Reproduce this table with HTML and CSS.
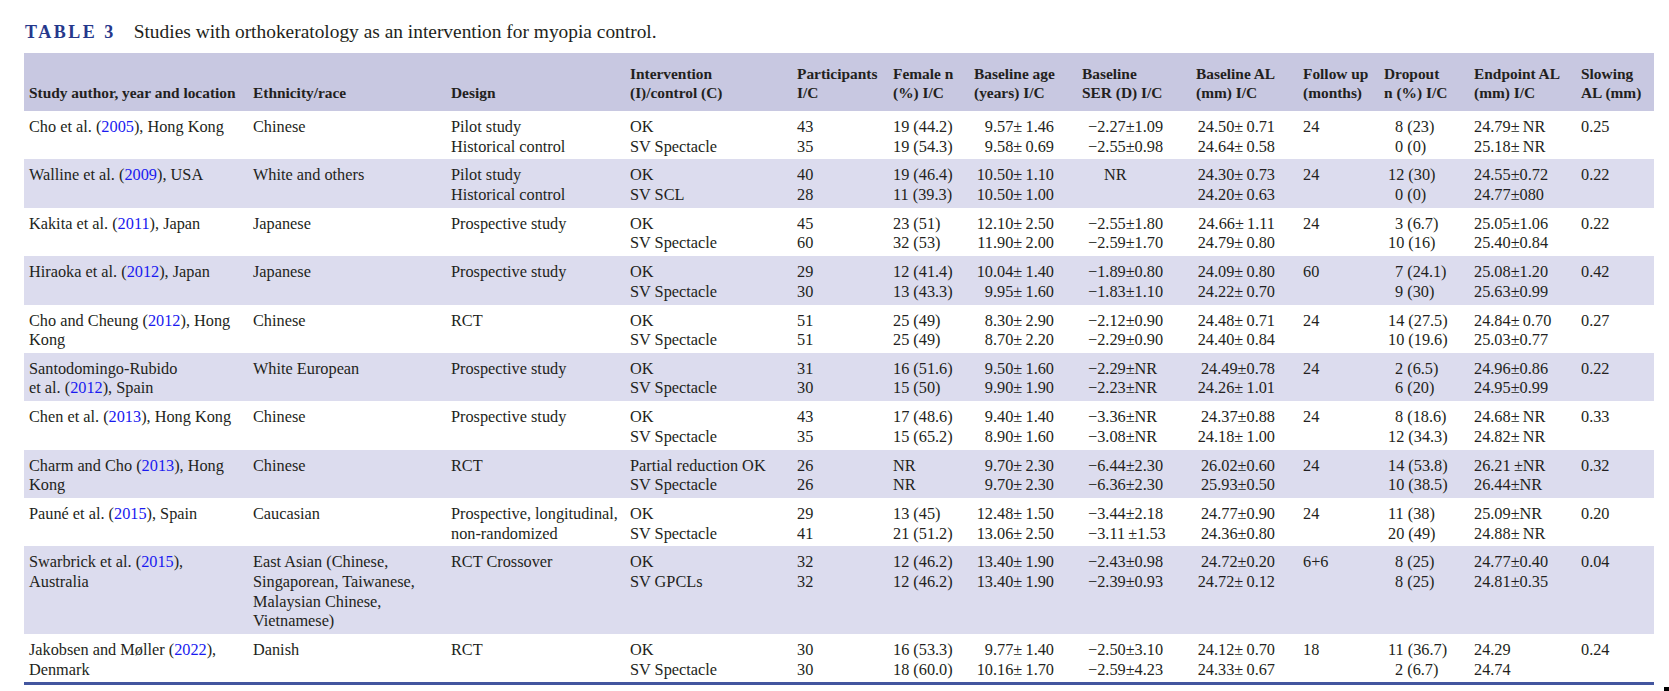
FILE: index.html
```html
<!DOCTYPE html>
<html lang="en">
<head>
<meta charset="utf-8">
<title>Table 3</title>
<link rel="stylesheet" href="styles.css">
</head>
<body>
<div class="page">
  <p class="caption"><span class="caption-label">TABLE 3</span><span class="caption-text">Studies with orthokeratology as an intervention for myopia control.</span></p>
  <div class="table-wrap">
    <table class="tbl">
      <colgroup>
        <col class="w1"><col class="w2"><col class="w3"><col class="w4"><col class="w5"><col class="w6"><col class="w7"><col class="w8"><col class="w9"><col class="w10"><col class="w11"><col class="w12"><col class="w13">
      </colgroup>
      <thead>
        <tr>
          <th>Study author, year and location</th>
          <th>Ethnicity/race</th>
          <th>Design</th>
          <th>Intervention<br>(I)/control (C)</th>
          <th>Participants<br>I/C</th>
          <th>Female n<br>(%) I/C</th>
          <th>Baseline age<br>(years) I/C</th>
          <th>Baseline<br>SER (D) I/C</th>
          <th>Baseline AL<br>(mm) I/C</th>
          <th>Follow up<br>(months)</th>
          <th>Dropout<br>n (%) I/C</th>
          <th>Endpoint AL<br>(mm) I/C</th>
          <th>Slowing<br>AL (mm)</th>
        </tr>
      </thead>
      <tbody>
        <tr>
          <td>Cho et al. (<span class="yr">2005</span>), Hong Kong</td>
          <td>Chinese</td>
          <td>Pilot study<br>Historical control</td>
          <td>OK<br>SV Spectacle</td>
          <td>43<br>35</td>
          <td>19 (44.2)<br>19 (54.3)</td>
          <td class="r">9.57±&thinsp;1.46<br>9.58±&thinsp;0.69</td>
          <td class="ser">−2.27±1.09<br>−2.55±0.98</td>
          <td class="r">24.50±&thinsp;0.71<br>24.64±&thinsp;0.58</td>
          <td>24</td>
          <td class="drop"><span class="fig"></span>8 (23)<br><span class="fig"></span>0 (0)</td>
          <td>24.79±&thinsp;NR<br>25.18±&thinsp;NR</td>
          <td>0.25</td>
        </tr>
        <tr class="alt">
          <td>Walline et al. (<span class="yr">2009</span>), USA</td>
          <td>White and others</td>
          <td>Pilot study<br>Historical control</td>
          <td>OK<br>SV SCL</td>
          <td>40<br>28</td>
          <td>19 (46.4)<br>11 (39.3)</td>
          <td class="r">10.50±&thinsp;1.10<br>10.50±&thinsp;1.00</td>
          <td class="ser"><span class="nr">NR</span></td>
          <td class="r">24.30±&thinsp;0.73<br>24.20±&thinsp;0.63</td>
          <td>24</td>
          <td class="drop">12 (30)<br><span class="fig"></span>0 (0)</td>
          <td>24.55±0.72<br>24.77±080</td>
          <td>0.22</td>
        </tr>
        <tr>
          <td>Kakita et al. (<span class="yr">2011</span>), Japan</td>
          <td>Japanese</td>
          <td>Prospective study</td>
          <td>OK<br>SV Spectacle</td>
          <td>45<br>60</td>
          <td>23 (51)<br>32 (53)</td>
          <td class="r">12.10±&thinsp;2.50<br>11.90±&thinsp;2.00</td>
          <td class="ser">−2.55±1.80<br>−2.59±1.70</td>
          <td class="r">24.66±&thinsp;1.11<br>24.79±&thinsp;0.80</td>
          <td>24</td>
          <td class="drop"><span class="fig"></span>3 (6.7)<br>10 (16)</td>
          <td>25.05±1.06<br>25.40±0.84</td>
          <td>0.22</td>
        </tr>
        <tr class="alt">
          <td>Hiraoka et al. (<span class="yr">2012</span>), Japan</td>
          <td>Japanese</td>
          <td>Prospective study</td>
          <td>OK<br>SV Spectacle</td>
          <td>29<br>30</td>
          <td>12 (41.4)<br>13 (43.3)</td>
          <td class="r">10.04±&thinsp;1.40<br>9.95±&thinsp;1.60</td>
          <td class="ser">−1.89±0.80<br>−1.83±1.10</td>
          <td class="r">24.09±&thinsp;0.80<br>24.22±&thinsp;0.70</td>
          <td>60</td>
          <td class="drop"><span class="fig"></span>7 (24.1)<br><span class="fig"></span>9 (30)</td>
          <td>25.08±1.20<br>25.63±0.99</td>
          <td>0.42</td>
        </tr>
        <tr>
          <td>Cho and Cheung (<span class="yr">2012</span>), Hong<br>Kong</td>
          <td>Chinese</td>
          <td>RCT</td>
          <td>OK<br>SV Spectacle</td>
          <td>51<br>51</td>
          <td>25 (49)<br>25 (49)</td>
          <td class="r">8.30±&thinsp;2.90<br>8.70±&thinsp;2.20</td>
          <td class="ser">−2.12±0.90<br>−2.29±0.90</td>
          <td class="r">24.48±&thinsp;0.71<br>24.40±&thinsp;0.84</td>
          <td>24</td>
          <td class="drop">14 (27.5)<br>10 (19.6)</td>
          <td>24.84±&thinsp;0.70<br>25.03±0.77</td>
          <td>0.27</td>
        </tr>
        <tr class="alt">
          <td>Santodomingo-Rubido<br>et al. (<span class="yr">2012</span>), Spain</td>
          <td>White European</td>
          <td>Prospective study</td>
          <td>OK<br>SV Spectacle</td>
          <td>31<br>30</td>
          <td>16 (51.6)<br>15 (50)</td>
          <td class="r">9.50±&thinsp;1.60<br>9.90±&thinsp;1.90</td>
          <td class="ser">−2.29±NR<br>−2.23±NR</td>
          <td class="r">24.49±0.78<br>24.26±&thinsp;1.01</td>
          <td>24</td>
          <td class="drop"><span class="fig"></span>2 (6.5)<br><span class="fig"></span>6 (20)</td>
          <td>24.96±0.86<br>24.95±0.99</td>
          <td>0.22</td>
        </tr>
        <tr>
          <td>Chen et al. (<span class="yr">2013</span>), Hong Kong</td>
          <td>Chinese</td>
          <td>Prospective study</td>
          <td>OK<br>SV Spectacle</td>
          <td>43<br>35</td>
          <td>17 (48.6)<br>15 (65.2)</td>
          <td class="r">9.40±&thinsp;1.40<br>8.90±&thinsp;1.60</td>
          <td class="ser">−3.36±NR<br>−3.08±NR</td>
          <td class="r">24.37±0.88<br>24.18±&thinsp;1.00</td>
          <td>24</td>
          <td class="drop"><span class="fig"></span>8 (18.6)<br>12 (34.3)</td>
          <td>24.68±&thinsp;NR<br>24.82±&thinsp;NR</td>
          <td>0.33</td>
        </tr>
        <tr class="alt">
          <td>Charm and Cho (<span class="yr">2013</span>), Hong<br>Kong</td>
          <td>Chinese</td>
          <td>RCT</td>
          <td>Partial reduction OK<br>SV Spectacle</td>
          <td>26<br>26</td>
          <td>NR<br>NR</td>
          <td class="r">9.70±&thinsp;2.30<br>9.70±&thinsp;2.30</td>
          <td class="ser">−6.44±2.30<br>−6.36±2.30</td>
          <td class="r">26.02±0.60<br>25.93±0.50</td>
          <td>24</td>
          <td class="drop">14 (53.8)<br>10 (38.5)</td>
          <td>26.21&thinsp;±NR<br>26.44±NR</td>
          <td>0.32</td>
        </tr>
        <tr>
          <td>Pauné et al. (<span class="yr">2015</span>), Spain</td>
          <td>Caucasian</td>
          <td>Prospective, longitudinal,<br>non-randomized</td>
          <td>OK<br>SV Spectacle</td>
          <td>29<br>41</td>
          <td>13 (45)<br>21 (51.2)</td>
          <td class="r">12.48±&thinsp;1.50<br>13.06±&thinsp;2.50</td>
          <td class="ser">−3.44±2.18<br>−3.11&thinsp;±1.53</td>
          <td class="r">24.77±0.90<br>24.36±0.80</td>
          <td>24</td>
          <td class="drop">11 (38)<br>20 (49)</td>
          <td>25.09±NR<br>24.88±&thinsp;NR</td>
          <td>0.20</td>
        </tr>
        <tr class="alt">
          <td>Swarbrick et al. (<span class="yr">2015</span>),<br>Australia</td>
          <td>East Asian (Chinese,<br>Singaporean, Taiwanese,<br>Malaysian Chinese,<br>Vietnamese)</td>
          <td>RCT Crossover</td>
          <td>OK<br>SV GPCLs</td>
          <td>32<br>32</td>
          <td>12 (46.2)<br>12 (46.2)</td>
          <td class="r">13.40±&thinsp;1.90<br>13.40±&thinsp;1.90</td>
          <td class="ser">−2.43±0.98<br>−2.39±0.93</td>
          <td class="r">24.72±0.20<br>24.72±&thinsp;0.12</td>
          <td>6+6</td>
          <td class="drop"><span class="fig"></span>8 (25)<br><span class="fig"></span>8 (25)</td>
          <td>24.77±0.40<br>24.81±0.35</td>
          <td>0.04</td>
        </tr>
        <tr>
          <td>Jakobsen and Møller (<span class="yr">2022</span>),<br>Denmark</td>
          <td>Danish</td>
          <td>RCT</td>
          <td>OK<br>SV Spectacle</td>
          <td>30<br>30</td>
          <td>16 (53.3)<br>18 (60.0)</td>
          <td class="r">9.77±&thinsp;1.40<br>10.16±&thinsp;1.70</td>
          <td class="ser">−2.50±3.10<br>−2.59±4.23</td>
          <td class="r">24.12±&thinsp;0.70<br>24.33±&thinsp;0.67</td>
          <td>18</td>
          <td class="drop">11 (36.7)<br><span class="fig"></span>2 (6.7)</td>
          <td>24.29<br>24.74</td>
          <td>0.24</td>
        </tr>
      </tbody>
    </table>
  </div>
  <div class="mark"></div>
</div>
</body>
</html>
```

FILE: styles.css
```css
* {
  box-sizing: border-box;
}

html,
body {
  margin: 0;
  padding: 0;
  background: #ffffff;
}

body {
  font-family: "Liberation Serif", "Times New Roman", serif;
  color: #231f20;
}

.page {
  position: relative;
  width: 1669px;
  height: 691px;
  padding: 20px 0 0 24px;
  overflow: hidden;
}

.caption {
  display: flex;
  align-items: baseline;
  gap: 18px;
  height: 24px;
  margin: 0 0 9px;
  padding-left: 1px;
  line-height: 24px;
}

.caption-label {
  font-size: 18px;
  font-weight: bold;
  letter-spacing: 2.5px;
  color: #26388c;
}

.caption-text {
  font-size: 19.4px;
}

.table-wrap {
  width: 1630px;
  border-bottom: 3px solid #43569f;
}

.tbl {
  width: 1630px;
  border-collapse: collapse;
  table-layout: fixed;
}

.w1 { width: 224px; }
.w2 { width: 198px; }
.w3 { width: 179px; }
.w4 { width: 167px; }
.w5 { width: 96px; }
.w6 { width: 81px; }
.w7 { width: 108px; }
.w8 { width: 114px; }
.w9 { width: 107px; }
.w10 { width: 81px; }
.w11 { width: 90px; }
.w12 { width: 107px; }
.w13 { width: 78px; }

.tbl th,
.tbl td {
  padding: 6px 5px 3.2px;
  text-align: left;
  vertical-align: top;
  white-space: nowrap;
  font-size: 16.3px;
  line-height: 19.6px;
  font-weight: normal;
}

.tbl th {
  padding: 11px 5px 9px;
  font-size: 15.4px;
  line-height: 19px;
  font-weight: bold;
  vertical-align: bottom;
  background: #c8c8e1;
}

.tbl tr.alt {
  background: #dcdcee;
}

.tbl td.r {
  text-align: right;
  padding-right: 23px;
}

.tbl td.ser {
  padding-left: 11px;
}

.tbl td.drop {
  padding-left: 9px;
}

.fig {
  display: inline-block;
  width: 7px;
}

.nr {
  padding-left: 16px;
}

.yr {
  color: #1a1af0;
}

.mark {
  position: absolute;
  left: 1664px;
  top: 687px;
  width: 5px;
  height: 4px;
  background: #000000;
}
```
